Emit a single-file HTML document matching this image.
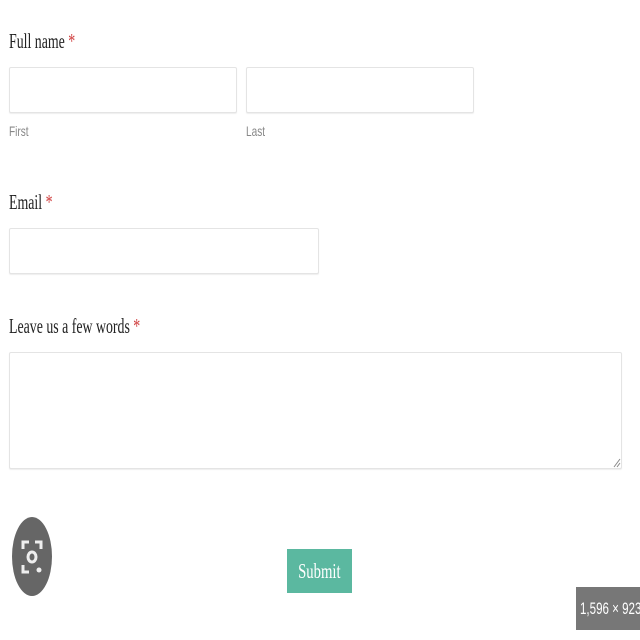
<!DOCTYPE html>
<html><head><style>
body{margin:0;width:640px;height:640px;background:#fff;position:relative;overflow:hidden;font-family:"Liberation Serif",serif;color:#333}
.l{position:absolute;font-size:21px;transform:scaleX(0.66);transform-origin:left top;white-space:nowrap;color:#222}
.l b{color:#d04040;font-weight:normal}
.s{position:absolute;font-family:"Liberation Sans",sans-serif;font-size:14px;color:#888;transform:scaleX(0.72);transform-origin:left top}
.b{position:absolute;border:1px solid #e4e4e4;border-radius:2px;box-shadow:0 1px 1px #eee;background:#fff;box-sizing:border-box}
</style></head><body>
<div class="l" style="left:9px;top:29px">Full name <b>*</b></div>
<div class="b" style="left:9px;top:67px;width:228px;height:46px"></div>
<div class="b" style="left:246px;top:67px;width:228px;height:46px"></div>
<div class="s" style="left:9px;top:123px">First</div>
<div class="s" style="left:246px;top:123px">Last</div>
<div class="l" style="left:9px;top:190px">Email <b>*</b></div>
<div class="b" style="left:9px;top:228px;width:310px;height:46px"></div>
<div class="l" style="left:9px;top:314px">Leave us a few words <b>*</b></div>
<div class="b" style="left:9px;top:352px;width:613px;height:117px"></div>
<svg style="position:absolute;left:612px;top:456px" width="10" height="12"><path d="M2 11L8 3M5 11L8 7" stroke="#888" stroke-width="1"/></svg>
<div style="position:absolute;left:12px;top:517px;width:40px;height:79px;border-radius:50%;background:#666"></div>
<svg style="position:absolute;left:20px;top:538px" width="24" height="38" fill="none" stroke="#eee" stroke-width="3"><path d="M3 11V4h6M15 4h6v7M3 27v7h6"/><ellipse cx="12" cy="19" rx="4" ry="5"/><circle cx="19" cy="32" r="2.5" fill="#eee" stroke="none"/></svg>
<div style="position:absolute;left:287px;top:549px;width:65px;height:44px;background:#5bb8a0;color:#fff;font-size:21px;text-align:center;line-height:44px"><span style="display:inline-block;transform:scaleX(0.7)">Submit</span></div>
<div style="position:absolute;left:576px;top:587px;width:64px;height:43px;background:#777;color:#fff;font-family:'Liberation Sans',sans-serif;font-size:17px;line-height:43px;white-space:nowrap;padding-left:4px;box-sizing:border-box"><span style="display:inline-block;transform:scaleX(0.68);transform-origin:left">1,596 × 923</span></div>
</body></html>
